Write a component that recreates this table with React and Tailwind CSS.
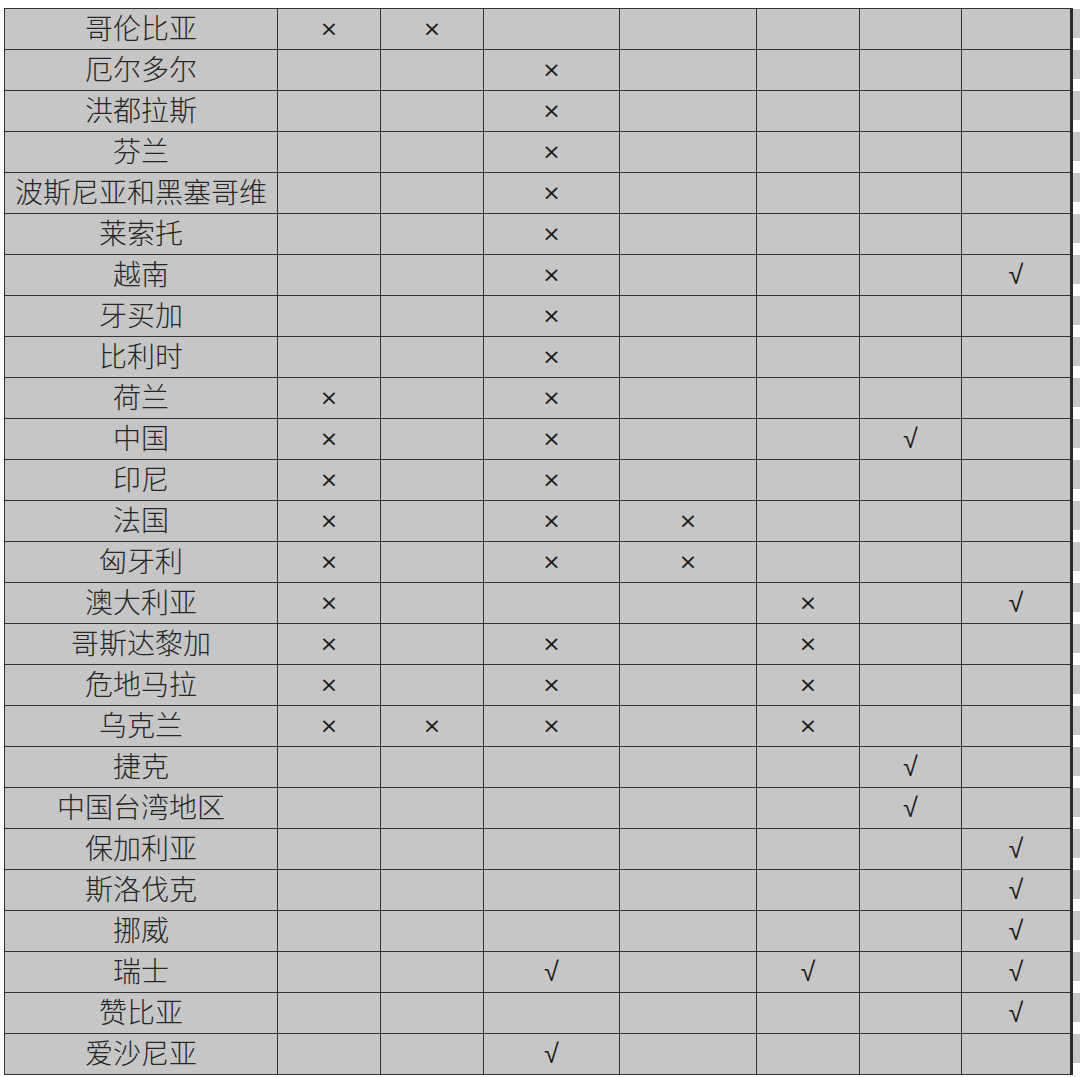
import React from "react";

// rows: name + marks for columns 2..8 ("" = empty)
const rows = [
  ["哥伦比亚", ["×", "×", "", "", "", "", ""]],
  ["厄尔多尔", ["", "", "×", "", "", "", ""]],
  ["洪都拉斯", ["", "", "×", "", "", "", ""]],
  ["芬兰", ["", "", "×", "", "", "", ""]],
  ["波斯尼亚和黑塞哥维", ["", "", "×", "", "", "", ""]],
  ["莱索托", ["", "", "×", "", "", "", ""]],
  ["越南", ["", "", "×", "", "", "", "√"]],
  ["牙买加", ["", "", "×", "", "", "", ""]],
  ["比利时", ["", "", "×", "", "", "", ""]],
  ["荷兰", ["×", "", "×", "", "", "", ""]],
  ["中国", ["×", "", "×", "", "", "√", ""]],
  ["印尼", ["×", "", "×", "", "", "", ""]],
  ["法国", ["×", "", "×", "×", "", "", ""]],
  ["匈牙利", ["×", "", "×", "×", "", "", ""]],
  ["澳大利亚", ["×", "", "", "", "×", "", "√"]],
  ["哥斯达黎加", ["×", "", "×", "", "×", "", ""]],
  ["危地马拉", ["×", "", "×", "", "×", "", ""]],
  ["乌克兰", ["×", "×", "×", "", "×", "", ""]],
  ["捷克", ["", "", "", "", "", "√", ""]],
  ["中国台湾地区", ["", "", "", "", "", "√", ""]],
  ["保加利亚", ["", "", "", "", "", "", "√"]],
  ["斯洛伐克", ["", "", "", "", "", "", "√"]],
  ["挪威", ["", "", "", "", "", "", "√"]],
  ["瑞士", ["", "", "√", "", "√", "", "√"]],
  ["赞比亚", ["", "", "", "", "", "", "√"]],
  ["爱沙尼亚", ["", "", "√", "", "", "", ""]],
];

export default function App() {
  return (
    <div className="min-h-screen bg-white pt-[8px] pl-[4px] flex items-start">
      <div className="grid grid-cols-[273px_103px_103px_136px_137px_103px_102px_108px] border-t border-l border-[#333] bg-[#c6c6c6] border-r-[3px] border-r-[#2a2a2a]">
        {rows.map(([name, marks], i) => (
          <React.Fragment key={i}>
            <div
              className="h-[41px] border-b border-r border-[#333] flex items-center justify-center text-[28px] font-[300] leading-none text-[#262626] pb-[4px]"
              style={{ fontFamily: '"Noto Sans CJK SC", "Noto Sans", sans-serif' }}
            >
              {name}
            </div>
            {marks.map((m, j) => (
              <div
                key={j}
                className={
                  "h-[41px] border-b border-[#333] flex items-center justify-center leading-none text-[#1a1a1a] " +
                  (m === "√" ? "text-[27px] " : "text-[22px] ") +
                  (j < 6 ? "border-r" : "")
                }
                style={{
                  fontFamily:
                    m === "√"
                      ? '"Liberation Sans", Arial, sans-serif'
                      : '"DejaVu Sans", "Liberation Sans", sans-serif',
                }}
              >
                {m}
              </div>
            ))}
          </React.Fragment>
        ))}
      </div>
      <div className="flex flex-col w-[8px] pt-[1px]">
        {rows.map((_, i) => (
          <div key={i} className="h-[41px] flex flex-col">
            <div className="h-[29px] bg-[#c8c8c8]" />
            <div className="h-[12px] bg-white" />
          </div>
        ))}
      </div>
    </div>
  );
}
